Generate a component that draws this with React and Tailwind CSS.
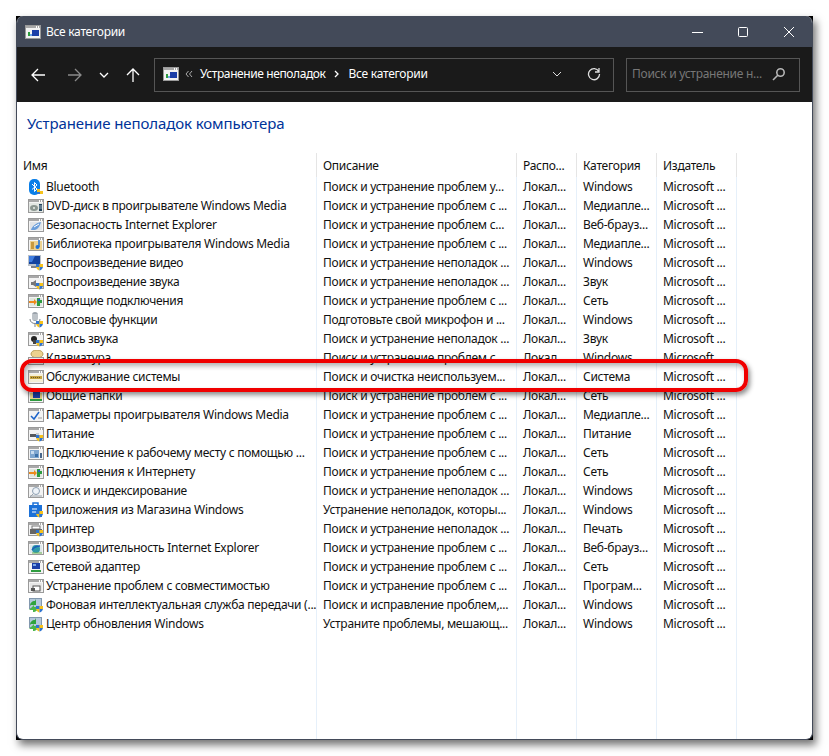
import React from 'react';

const P = 'Поиск и устранение проблем с ...';
const N = 'Поиск и устранение неполадок ...';
const L = 'Локал...';
const M = 'Microsoft ...';

const rows = [
  ['bluetooth', 'Bluetooth', 'Поиск и устранение проблем у...', 'Windows'],
  ['dvd', 'DVD-диск в проигрывателе Windows Media', P, 'Медиапле...'],
  ['ie', 'Безопасность Internet Explorer', 'Поиск и устранение проблем с...', 'Веб-брауз...'],
  ['library', 'Библиотека проигрывателя Windows Media', P, 'Медиапле...'],
  ['video', 'Воспроизведение видео', N, 'Windows'],
  ['sound', 'Воспроизведение звука', N, 'Звук'],
  ['incoming', 'Входящие подключения', P, 'Сеть'],
  ['speech', 'Голосовые функции', 'Подготовьте свой микрофон и ...', 'Windows'],
  ['record', 'Запись звука', N, 'Звук'],
  ['keyboard', 'Клавиатура', P, 'Windows'],
  ['maintenance', 'Обслуживание системы', 'Поиск и очистка неиспользуем...', 'Система'],
  ['shared', 'Общие папки', P, 'Сеть'],
  ['settings', 'Параметры проигрывателя Windows Media', P, 'Медиапле...'],
  ['power', 'Питание', P, 'Питание'],
  ['workplace', 'Подключение к рабочему месту с помощью ...', P, 'Сеть'],
  ['incoming', 'Подключения к Интернету', P, 'Сеть'],
  ['search', 'Поиск и индексирование', N, 'Windows'],
  ['store', 'Приложения из Магазина Windows', 'Устранение неполадок, которы...', 'Windows'],
  ['printer', 'Принтер', N, 'Печать'],
  ['perf', 'Производительность Internet Explorer', P, 'Веб-брауз...'],
  ['adapter', 'Сетевой адаптер', P, 'Сеть'],
  ['compat', 'Устранение проблем с совместимостью', P, 'Програм...'],
  ['update', 'Фоновая интеллектуальная служба передачи (...', 'Поиск и исправление проблем,...', 'Windows'],
  ['update', 'Центр обновления Windows', 'Устраните проблемы, мешающ...', 'Windows'],
];

const gridCols = 'grid grid-cols-[300px_200px_60px_80px_80px_1fr]';

// grey control panel style frame most of the icons sit in
const Frame = () => (
  <>
    <rect x="0.5" y="1.5" width="15" height="13" fill="#f3f3f3" stroke="#9a9a9a" />
    <rect x="1" y="2" width="14" height="2" fill="#a8a8a8" />
    <rect x="11" y="2" width="1" height="2" fill="#fff" />
    <rect x="13" y="2" width="1" height="2" fill="#fff" />
  </>
);

const Shield = () => (
  <>
    <path d="M8 9h3.500v6.500C9.500 15 8 13.500 8 11z" fill="#f6c21c" />
    <path d="M11.500 9H15v2c0 2.500-1.500 4-3.500 4.500z" fill="#2f74d0" />
    <path d="M8 9h3.500v3H8z" fill="#2f74d0" />
    <path d="M11.500 9H15v3h-3.500z" fill="#f6c21c" />
  </>
);

const glyphs = {
  bluetooth: (
    <>
      <rect x="1" y="0" width="11" height="16" rx="5" fill="#0a7fe8" />
      <path d="M4 5l5 5-2.500 2.500v-9L9 6 4 10.500" fill="none" stroke="#fff" />
      <rect x="9" y="10" width="3" height="3" fill="#f6c21c" />
      <rect x="12" y="12" width="3" height="3" fill="#f6c21c" />
      <rect x="9" y="13" width="3" height="2" fill="#2f74d0" />
    </>
  ),
  dvd: (
    <>
      <Frame />
      <rect x="1" y="5" width="14" height="9" fill="#e2e6e2" />
      <ellipse cx="6" cy="10" rx="4" ry="3" fill="#8b9690" />
      <circle cx="6" cy="10" r="1" fill="#e8ece8" />
      <rect x="11" y="6" width="3" height="7" fill="#24445c" />
      <path d="M11 8h3M11 10h3" stroke="#9ab0c0" />
    </>
  ),
  ie: (
    <>
      <Frame />
      <rect x="2" y="5" width="12" height="8" fill="#dfe3e7" />
      <path d="M3 13c1-4 5-7 10-8-1 4-3 7-6 8z" fill="#6a9edb" />
      <path d="M6 10l5-3" stroke="#fff" />
    </>
  ),
  library: (
    <>
      <Frame />
      <rect x="2" y="5" width="12" height="9" fill="#edd28f" />
      <rect x="3" y="6" width="3" height="7" fill="#c89a3f" />
      <path d="M11 4v7" stroke="#1c71d8" strokeWidth="1.500" />
      <circle cx="9.500" cy="11" r="2" fill="#1c71d8" />
    </>
  ),
  video: (
    <>
      <rect x="0" y="0" width="13" height="11" fill="#b9c0c8" />
      <rect x="1" y="1" width="11" height="8" fill="#13439e" />
      <path d="M1 1h6l-3 6H1z" fill="#3f7de0" />
      <rect x="3" y="11" width="7" height="2" fill="#7c8288" />
      <Shield />
    </>
  ),
  sound: (
    <>
      <Frame />
      <path d="M3 8h2l3-2v7l-3-2H3z" fill="#777" />
      <Shield />
    </>
  ),
  incoming: (
    <>
      <Frame />
      <rect x="2" y="5" width="12" height="8" fill="#dfe6df" />
      <path d="M1 8h5V6l3 3-3 3v-2H1z" fill="#ee8a1d" />
      <path d="M9 5h3v2h2v3h-2v3H9z" fill="#2e9c3f" />
      <rect x="10" y="6" width="2" height="2" fill="#2a62c2" />
    </>
  ),
  speech: (
    <>
      <rect x="4" y="0" width="6" height="9" rx="3" fill="#9aa2aa" />
      <path d="M4 3h6M4 5h6M4 7h6" stroke="#dfe3e6" />
      <path d="M2 7c0 6 10 6 10 0M7 12v3" fill="none" stroke="#7b838b" />
      <Shield />
    </>
  ),
  record: (
    <>
      <Frame />
      <circle cx="6" cy="8" r="3" fill="#222" />
      <rect x="5" y="9" width="3" height="4" fill="#444" />
      <Shield />
    </>
  ),
  keyboard: (
    <>
      <ellipse cx="9" cy="4" rx="6" ry="4" fill="#ecd28f" stroke="#b79a56" />
      <rect x="0.500" y="7.500" width="15" height="7" fill="#f3f3f3" stroke="#9a9a9a" />
    </>
  ),
  maintenance: (
    <>
      <Frame />
      <rect x="1" y="5" width="14" height="8" fill="#f5efd6" />
      <rect x="2" y="7" width="12" height="3" fill="#c4a240" />
      <path d="M3 8.500h10" stroke="#6e5a1e" strokeDasharray="1 1" />
    </>
  ),
  shared: (
    <>
      <Frame />
      <rect x="2" y="5" width="12" height="8" fill="#e9d58a" />
      <rect x="5" y="4" width="7" height="6" fill="#1b3ea8" />
      <path d="M2 12h12" stroke="#2e9c3f" strokeWidth="2" />
    </>
  ),
  settings: (
    <>
      <Frame />
      <path d="M3 9l3 3 5-7" fill="none" stroke="#1c63c9" strokeWidth="1.500" />
      <path d="M10 11h4" stroke="#9a9a9a" />
    </>
  ),
  power: (
    <>
      <Frame />
      <rect x="2" y="8" width="6" height="3" fill="#55595e" />
      <path d="M8 7h3v5H8z" fill="#c9cdd1" />
      <Shield />
    </>
  ),
  workplace: (
    <>
      <Frame />
      <rect x="2" y="5" width="9" height="8" fill="#7fa6cf" />
      <rect x="3" y="6" width="3" height="3" fill="#c7dbef" />
      <rect x="7" y="9" width="3" height="3" fill="#3a6fa8" />
      <rect x="12" y="8" width="2" height="5" fill="#47668a" />
    </>
  ),
  search: (
    <>
      <Frame />
      <circle cx="8" cy="8" r="3.500" fill="#eef3f8" stroke="#8da0b3" />
      <path d="M5 11l-3 3M2 13h12" stroke="#9aa4ae" />
    </>
  ),
  store: (
    <>
      <path d="M5 3V1h5v2" fill="none" stroke="#1c71d8" strokeWidth="1.500" />
      <rect x="1" y="3" width="13" height="12" fill="#1c71d8" />
      <path d="M4 7h5M4 10h5" stroke="#fff" />
      <Shield />
    </>
  ),
  printer: (
    <>
      <Frame />
      <rect x="4" y="5" width="8" height="3" fill="#fff" stroke="#777" />
      <rect x="2" y="8" width="12" height="5" fill="#666" />
      <Shield />
    </>
  ),
  perf: (
    <>
      <Frame />
      <rect x="2" y="5" width="12" height="8" fill="#dde6ea" />
      <circle cx="8" cy="9" r="4" fill="#2f9aa8" />
      <path d="M4 10c2-3 5-4 8-4" stroke="#1c5fb8" strokeWidth="1.500" fill="none" />
      <path d="M4 13h10" stroke="#67b04a" />
    </>
  ),
  adapter: (
    <>
      <Frame />
      <rect x="4" y="4" width="8" height="6" fill="#1b3ea8" />
      <rect x="5" y="5" width="3" height="2" fill="#7aa8ea" />
      <rect x="3" y="11" width="10" height="2" fill="#2e9c3f" />
    </>
  ),
  compat: (
    <>
      <Frame />
      <rect x="2" y="5" width="12" height="8" fill="#e6e6e6" />
      <rect x="5" y="8" width="7" height="5" fill="#fff" stroke="#555" />
      <rect x="3" y="10" width="4" height="3" fill="#555" />
    </>
  ),
  update: (
    <>
      <rect x="1.500" y="1.500" width="12" height="10" fill="#b4c8dc" stroke="#8298ae" />
      <path d="M2 9c0-3 2-5 5-5l1-2v6H3z" fill="#2fa33c" />
      <path d="M1 13l5-5v2h4c0 3-2 5-5 5v-2z" fill="#49b64a" />
      <Shield />
    </>
  ),
  cp: (
    <>
      <Frame />
      <rect x="7" y="6" width="7" height="6" fill="#1b3ea8" />
      <rect x="3" y="8" width="2" height="4" fill="#2e9c3f" />
      <rect x="5" y="10" width="2" height="2" fill="#6fa8e8" />
    </>
  ),
};

const Icon = ({ name }) => (
  <svg width="16" height="16" viewBox="0 0 16 16" className="shrink-0">
    {glyphs[name]}
  </svg>
);

const Row = ({ icon, name, desc, cat }) => (
  <div className={`${gridCols} h-[19px] text-[12px] leading-[19px] text-[#111]`}>
    <div className="flex items-center gap-[2px] pl-[11px] border-r border-[#e6f0fa] overflow-hidden whitespace-nowrap">
      <Icon name={icon} />
      <span>{name}</span>
    </div>
    <div className="pl-[6px] border-r border-[#e6f0fa] whitespace-nowrap overflow-hidden">{desc}</div>
    <div className="pl-[6px] border-r border-[#e6f0fa] whitespace-nowrap overflow-hidden">{L}</div>
    <div className="pl-[6px] border-r border-[#e6f0fa] whitespace-nowrap overflow-hidden">{cat}</div>
    <div className="pl-[6px] border-r border-[#e6f0fa] whitespace-nowrap overflow-hidden">{M}</div>
    <div />
  </div>
);

export default function App() {
  return (
    <div className="w-[829px] h-[756px] bg-white pt-4 pl-4 font-['Noto_Sans',sans-serif] tracking-[-0.27px]">
      <div className="w-[797px] h-[724px] bg-black shadow-[3px_5px_8px_rgba(0,0,0,0.55)]">
        <div className="relative w-full h-full flex flex-col rounded-[7px] overflow-hidden bg-white border border-t-0 border-[#434a59]">
          {/* title bar */}
          <div className="h-[31px] shrink-0 bg-[#434a59] flex items-center pl-2 text-white text-[12px]">
            <Icon name="cp" />
            <span className="ml-[5px] flex-1">Все категории</span>
            <svg width="12" height="12" viewBox="0 0 12 12" className="mr-[33px]" fill="none" stroke="#fff">
              <path d="M0 6.500h11" />
            </svg>
            <svg width="12" height="12" viewBox="0 0 12 12" className="mr-[34px]" fill="none" stroke="#fff">
              <rect x="1.500" y="1.500" width="9" height="9" rx="1" />
            </svg>
            <svg width="12" height="12" viewBox="0 0 12 12" className="mr-[17px]" fill="none" stroke="#fff">
              <path d="M1 1l10 10M11 1L1 11" />
            </svg>
          </div>

          {/* toolbar */}
          <div className="h-[55px] shrink-0 bg-[#1a1a1a] flex items-center pl-[14px] pr-[12px]">
            <svg width="14" height="14" viewBox="0 0 14 14" fill="none" stroke="#fff" strokeWidth="1.300">
              <path d="M14 7H1M7 1L1 7l6 6" />
            </svg>
            <svg width="14" height="14" viewBox="0 0 14 14" className="ml-[23px]" fill="none" stroke="#8a8a8a" strokeWidth="1.300">
              <path d="M0 7h13M7 1l6 6-6 6" />
            </svg>
            <svg width="10" height="10" viewBox="0 0 10 10" className="ml-[17px]" fill="none" stroke="#fff" strokeWidth="1.300">
              <path d="M1 3l4 4 4-4" />
            </svg>
            <svg width="14" height="14" viewBox="0 0 14 14" className="ml-[17px]" fill="none" stroke="#fff" strokeWidth="1.300">
              <path d="M7 14V1M1 7l6-6 6 6" />
            </svg>
            <div className="ml-[14px] w-[460px] h-[34px] border border-[#555] flex items-center pl-2 pb-[1px] text-white text-[12px]">
              <Icon name="cp" />
              <svg width="8" height="8" viewBox="0 0 8 8" className="ml-[6px]" fill="none" stroke="#aaa">
                <path d="M3.500 1L1 4l2.500 3M7 1L4.500 4 7 7" />
              </svg>
              <span className="ml-[7px] tracking-[-0.4px]">Устранение неполадок</span>
              <svg width="8" height="8" viewBox="0 0 8 8" className="ml-[7px]" fill="none" stroke="#fff" strokeWidth="1.300">
                <path d="M2 1l3 3-3 3" />
              </svg>
              <span className="ml-[8px] flex-1">Все категории</span>
              <svg width="10" height="10" viewBox="0 0 10 10" className="mr-[25px]" fill="none" stroke="#ddd">
                <path d="M1 3l4 4 4-4" />
              </svg>
              <svg width="14" height="14" viewBox="0 0 14 14" className="mr-[12px]" fill="none" stroke="#ddd" strokeWidth="1.300">
                <path d="M11.800 4.500A5.500 5.500 0 1 0 12.500 7M12 1v4H8" />
              </svg>
            </div>
            <div className="ml-[12px] w-[174px] h-[34px] border border-[#555] flex items-center pl-[5px] pb-[1px] text-[#777] text-[12px]">
              <span className="flex-1">Поиск и устранение н...</span>
              <svg width="14" height="14" viewBox="0 0 14 14" className="mr-[13px]" fill="none" stroke="#b5b5b5" strokeWidth="1.600">
                <circle cx="8.500" cy="5.500" r="3.700" />
                <path d="M6 8l-5 5" />
              </svg>
            </div>
          </div>

          {/* content */}
          <div className="flex-1 flex flex-col min-h-0">
            <h1 className="h-[51px] shrink-0 pl-[10px] text-[15px] leading-[42px] tracking-[-0.1px] text-[#003399] font-normal">
              Устранение неполадок компьютера
            </h1>
            <div className={`${gridCols} h-[24px] shrink-0 text-[12px] leading-[25px] text-[#111]`}>
              <div className="pl-[6px] border-r border-[#e5e5e5]">Имя</div>
              <div className="pl-[6px] border-r border-[#e5e5e5]">Описание</div>
              <div className="pl-[6px] border-r border-[#e5e5e5]">Распо...</div>
              <div className="pl-[6px] border-r border-[#e5e5e5]">Категория</div>
              <div className="pl-[6px] border-r border-[#e5e5e5]">Издатель</div>
              <div />
            </div>
            {rows.map((r, i) => (
              <Row key={i} icon={r[0]} name={r[1]} desc={r[2]} cat={r[3]} />
            ))}
            <div className={`${gridCols} flex-1`}>
              <div className="border-r border-[#e6f0fa]" />
              <div className="border-r border-[#e6f0fa]" />
              <div className="border-r border-[#e6f0fa]" />
              <div className="border-r border-[#e6f0fa]" />
              <div className="border-r border-[#e6f0fa]" />
              <div />
            </div>
          </div>

          {/* red highlight drawn over the list */}
          <div className="absolute left-[3px] top-[343px] w-[728px] h-[33px] border-[4px] border-[#f00000] rounded-[12px] shadow-[2px_3px_5px_rgba(0,0,0,0.45),inset_2px_3px_5px_rgba(0,0,0,0.3)]" />
        </div>
      </div>
    </div>
  );
}
